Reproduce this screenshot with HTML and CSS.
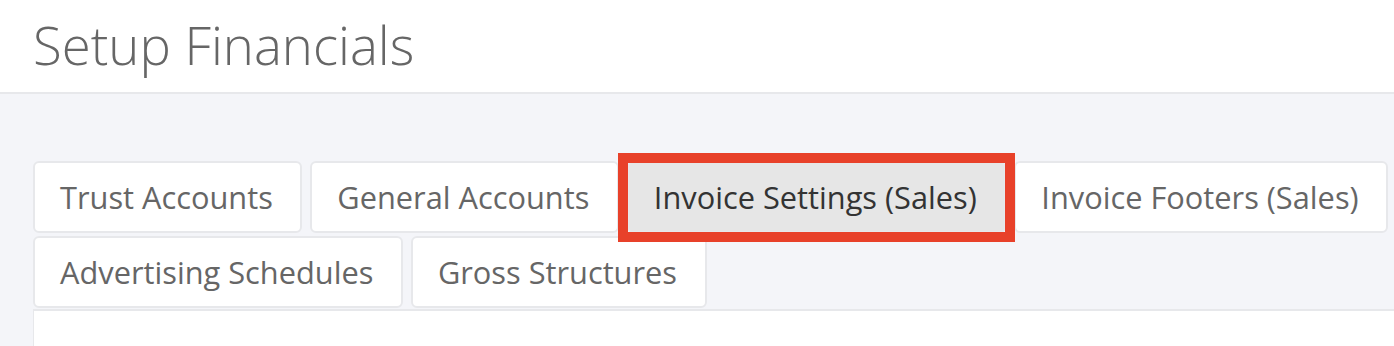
FILE: index.html
```html
<!DOCTYPE html>
<html lang="en">
<head>
<meta charset="utf-8">
<title>Setup Financials</title>
<link rel="stylesheet" href="styles.css">
</head>
<body>
<header class="page-header">
  <h1 class="page-title">Setup Financials</h1>
</header>
<main class="page-body">
  <nav class="tabs">
    <a class="tab">Trust Accounts</a>
    <a class="tab">General Accounts</a>
    <a class="tab tab-active">Invoice Settings (Sales)</a>
    <a class="tab">Invoice Footers (Sales)</a>
    <a class="tab">Advertising Schedules</a>
    <a class="tab">Gross Structures</a>
  </nav>
  <section class="panel"></section>
</main>
</body>
</html>
```
FILE: styles.css
```css
html, body {
  margin: 0;
  padding: 0;
}
body {
  font-family: "Open Sans", "Liberation Sans", sans-serif;
  background: #f4f5f9;
  width: 1394px;
  height: 346px;
  overflow: hidden;
}
.page-header {
  background: #ffffff;
  height: 94px;
  border-bottom: 2px solid #e7e8eb;
  padding-left: 33px;
  box-sizing: border-box;
  display: flex;
  align-items: center;
}
.page-title {
  margin: 0 0 2px 0;
  font-weight: 300;
  font-size: 52.7px;
  color: #666666;
  line-height: 1;
}
.page-body {
  padding: 67px 0 0 33px;
}
.tabs {
  display: flex;
  flex-wrap: wrap;
  column-gap: 8px;
  row-gap: 3px;
}
.tab {
  display: block;
  height: 72px;
  box-sizing: border-box;
  line-height: 68px;
  padding: 0 27.5px 0 25px;
  font-size: 30.78px;
  color: #666666;
  background: #ffffff;
  border: 2px solid #e7e8eb;
  border-radius: 6px;
  white-space: nowrap;
}
.tab-active {
  background: #e6e6e6;
  color: #333333;
  position: relative;
  z-index: 1;
}
.tab-active::after {
  content: "";
  position: absolute;
  top: -10px;
  bottom: -11px;
  left: -11px;
  right: -11px;
  border: 10px solid #e8412a;
}
.panel {
  margin-top: 1px;
  background: #ffffff;
  border-top: 2px solid #e7e8eb;
  border-left: 1px solid #e7e8eb;
  height: 60px;
}
```
